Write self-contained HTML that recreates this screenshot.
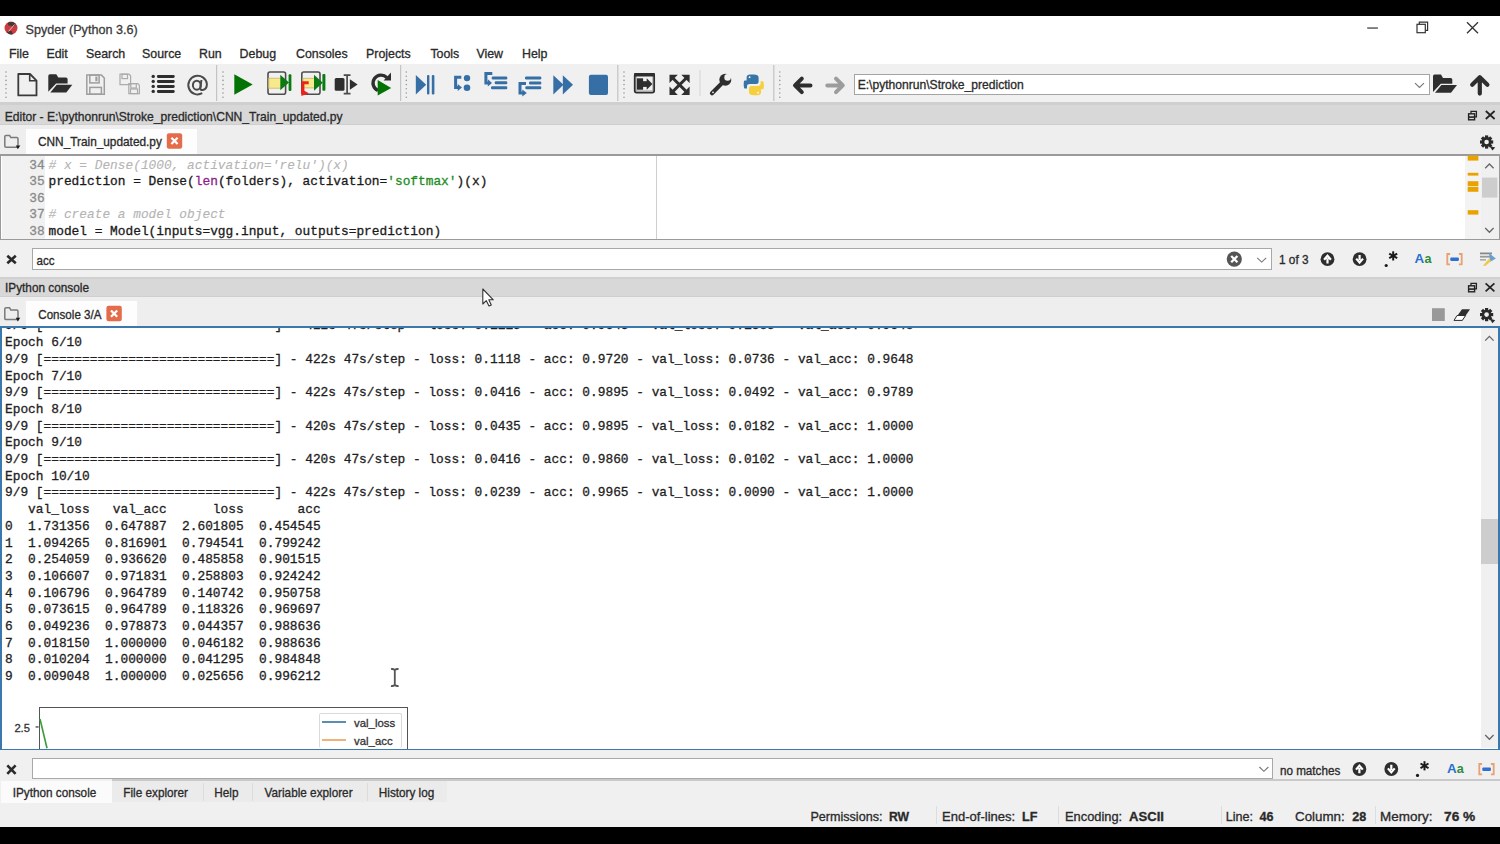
<!DOCTYPE html>
<html><head><meta charset="utf-8">
<style>
*{box-sizing:border-box;margin:0;padding:0}
html,body{width:1500px;height:844px;overflow:hidden;background:#f0f0f0;font-family:'Liberation Sans', sans-serif}
.a{position:absolute}
.t{position:absolute;white-space:pre;-webkit-text-stroke:0.3px currentColor}
svg{position:absolute;left:0;top:0}
</style></head><body>
<div class="a" style="left:0px;top:0px;width:1500px;height:16px;background:#000;"></div><div class="a" style="left:0px;top:16px;width:1500px;height:48px;background:#fff;"></div><div class="a" style="left:0px;top:64px;width:1500px;height:38px;background:#f0f0f0;"></div><div class="a" style="left:0px;top:102px;width:1500px;height:3px;background:#cfcfcf;"></div><div class="a" style="left:0px;top:105px;width:1500px;height:19px;background:#d8d8d8;"></div><div class="a" style="left:0px;top:123.5px;width:1500px;height:1.8px;background:#cecece;"></div><div class="a" style="left:0px;top:125px;width:1500px;height:29px;background:#eeeeee;"></div><div class="a" style="left:26px;top:129px;width:171px;height:25px;background:#fdfdfd;"></div><div class="a" style="left:0px;top:153.6px;width:1500px;height:86.4px;background:#fff;border:2px solid #9a9a9a;border-right-width:1px;border-left-width:1.5px;border-bottom-width:1.6px"></div><div class="a" style="left:1.5px;top:155.5px;width:43px;height:83px;background:#f1f1f1;"></div><div class="a" style="left:656px;top:155.5px;width:1px;height:83px;background:#cfcfcf;"></div><div class="a" style="left:1465px;top:155.5px;width:16px;height:83px;background:#f3f3f3;"></div><div class="a" style="left:1481px;top:155.5px;width:17.5px;height:83px;background:#f0f0f0;"></div><div class="a" style="left:0px;top:240px;width:1500px;height:37px;background:#f0f0f0;"></div><div class="a" style="left:32px;top:248px;width:1240px;height:22px;background:#fff;border:1px solid #a8a8a8"></div><div class="a" style="left:0px;top:277px;width:1500px;height:20.4px;background:#d8d8d8;"></div><div class="a" style="left:0px;top:277px;width:1500px;height:2px;background:#d0d0d0;"></div><div class="a" style="left:0px;top:295.6px;width:1500px;height:1.8px;background:#cfcfcf;"></div><div class="a" style="left:0px;top:297px;width:1500px;height:29px;background:#eeeeee;"></div><div class="a" style="left:26px;top:301px;width:111px;height:25px;background:#fdfdfd;"></div><div class="a" style="left:0px;top:326px;width:1500px;height:424px;background:#fff;border:2px solid #3a78ad;border-bottom-width:1.5px"></div><div class="a" style="left:1481px;top:328px;width:17px;height:420px;background:#f0f0f0;"></div><div class="a" style="left:1481px;top:519px;width:17px;height:45px;background:#cdcdcd;"></div><div class="a" style="left:0px;top:750px;width:1500px;height:31px;background:#f0f0f0;"></div><div class="a" style="left:32px;top:758px;width:1241px;height:21px;background:#fff;border:1px solid #a8a8a8"></div><div class="a" style="left:0px;top:781px;width:1500px;height:45px;background:#f0f0f0;"></div><div class="a" style="left:1px;top:781px;width:111px;height:22px;background:#fbfbfb;"></div><div class="a" style="left:112px;top:781px;width:335px;height:21px;background:#ebebeb;"></div><div class="a" style="left:202.5px;top:783px;width:1px;height:18px;background:#dcdcdc;"></div><div class="a" style="left:252px;top:783px;width:1px;height:18px;background:#dcdcdc;"></div><div class="a" style="left:367px;top:783px;width:1px;height:18px;background:#dcdcdc;"></div><div class="a" style="left:112px;top:778.6px;width:1388px;height:2.6px;background:#c9c9c9;"></div><div class="a" style="left:0px;top:826.6px;width:1500px;height:18px;background:#000;"></div><div class="t" style="left:25.60px;top:24.13px;font-size:12.6px;line-height:12.6px;color:#3a3a3a;font-weight:400;font-family:'Liberation Sans', sans-serif;">Spyder (Python 3.6)</div><div class="t" style="left:9.00px;top:48.10px;font-size:12.4px;line-height:12.4px;color:#2a2a2a;font-weight:400;font-family:'Liberation Sans', sans-serif;transform:scale(1.0,1.06);transform-origin:0 10.50px;">File</div><div class="t" style="left:46.40px;top:48.10px;font-size:12.4px;line-height:12.4px;color:#2a2a2a;font-weight:400;font-family:'Liberation Sans', sans-serif;transform:scale(1.0,1.06);transform-origin:0 10.50px;">Edit</div><div class="t" style="left:86.00px;top:48.10px;font-size:12.4px;line-height:12.4px;color:#2a2a2a;font-weight:400;font-family:'Liberation Sans', sans-serif;transform:scale(1.0,1.06);transform-origin:0 10.50px;">Search</div><div class="t" style="left:142.00px;top:48.10px;font-size:12.4px;line-height:12.4px;color:#2a2a2a;font-weight:400;font-family:'Liberation Sans', sans-serif;transform:scale(1.0,1.06);transform-origin:0 10.50px;">Source</div><div class="t" style="left:199.00px;top:48.10px;font-size:12.4px;line-height:12.4px;color:#2a2a2a;font-weight:400;font-family:'Liberation Sans', sans-serif;transform:scale(1.0,1.06);transform-origin:0 10.50px;">Run</div><div class="t" style="left:239.60px;top:48.10px;font-size:12.4px;line-height:12.4px;color:#2a2a2a;font-weight:400;font-family:'Liberation Sans', sans-serif;transform:scale(1.0,1.06);transform-origin:0 10.50px;">Debug</div><div class="t" style="left:296.00px;top:48.10px;font-size:12.4px;line-height:12.4px;color:#2a2a2a;font-weight:400;font-family:'Liberation Sans', sans-serif;transform:scale(1.0,1.06);transform-origin:0 10.50px;">Consoles</div><div class="t" style="left:366.00px;top:48.10px;font-size:12.4px;line-height:12.4px;color:#2a2a2a;font-weight:400;font-family:'Liberation Sans', sans-serif;transform:scale(1.0,1.06);transform-origin:0 10.50px;">Projects</div><div class="t" style="left:430.40px;top:48.10px;font-size:12.4px;line-height:12.4px;color:#2a2a2a;font-weight:400;font-family:'Liberation Sans', sans-serif;transform:scale(1.0,1.06);transform-origin:0 10.50px;">Tools</div><div class="t" style="left:476.40px;top:48.10px;font-size:12.4px;line-height:12.4px;color:#2a2a2a;font-weight:400;font-family:'Liberation Sans', sans-serif;transform:scale(1.0,1.06);transform-origin:0 10.50px;">View</div><div class="t" style="left:522.00px;top:48.10px;font-size:12.4px;line-height:12.4px;color:#2a2a2a;font-weight:400;font-family:'Liberation Sans', sans-serif;transform:scale(1.0,1.06);transform-origin:0 10.50px;">Help</div><div class="a" style="left:853.5px;top:73.5px;width:576px;height:21.5px;background:#fff;border:1px solid #a4a4a4"></div><div class="t" style="left:857.70px;top:79.06px;font-size:12.1px;line-height:12.1px;color:#2a2a2a;font-weight:400;font-family:'Liberation Sans', sans-serif;transform:scale(1.0,1.06);transform-origin:0 10.24px;">E:\pythonrun\Stroke_prediction</div><div class="t" style="left:4.70px;top:110.77px;font-size:12.08px;line-height:12.08px;color:#2a2a2a;font-weight:400;font-family:'Liberation Sans', sans-serif;transform:scale(1.0,1.04);transform-origin:0 10.23px;">Editor - E:\pythonrun\Stroke_prediction\CNN_Train_updated.py</div><div class="t" style="left:38.00px;top:136.88px;font-size:11.84px;line-height:11.84px;color:#2a2a2a;font-weight:400;font-family:'Liberation Sans', sans-serif;transform:scale(1.0,1.08);transform-origin:0 10.02px;">CNN_Train_updated.py</div><div class="t" style="left:29.30px;top:159.76px;font-size:12.84px;line-height:12.84px;color:#8a8a8a;font-weight:400;font-family:'Liberation Mono', monospace;">34</div><div class="t" style="left:48.50px;top:159.76px;font-size:12.84px;line-height:12.84px;color:#1a1a1a;font-weight:400;font-family:'Liberation Mono', monospace;"><span style="color:#b4b4b4;font-style:italic;-webkit-text-stroke:0.1px #b4b4b4"># x = Dense(1000, activation='relu')(x)</span></div><div class="t" style="left:29.30px;top:176.31px;font-size:12.84px;line-height:12.84px;color:#8a8a8a;font-weight:400;font-family:'Liberation Mono', monospace;">35</div><div class="t" style="left:48.50px;top:176.31px;font-size:12.84px;line-height:12.84px;color:#1a1a1a;font-weight:400;font-family:'Liberation Mono', monospace;">prediction = Dense(<span style="color:#8c1f8c">len</span>(folders), activation=<span style="color:#1e8c1e">'softmax'</span>)(x)</div><div class="t" style="left:29.30px;top:192.86px;font-size:12.84px;line-height:12.84px;color:#8a8a8a;font-weight:400;font-family:'Liberation Mono', monospace;">36</div><div class="t" style="left:48.50px;top:192.86px;font-size:12.84px;line-height:12.84px;color:#1a1a1a;font-weight:400;font-family:'Liberation Mono', monospace;"></div><div class="t" style="left:29.30px;top:209.41px;font-size:12.84px;line-height:12.84px;color:#8a8a8a;font-weight:400;font-family:'Liberation Mono', monospace;">37</div><div class="t" style="left:48.50px;top:209.41px;font-size:12.84px;line-height:12.84px;color:#1a1a1a;font-weight:400;font-family:'Liberation Mono', monospace;"><span style="color:#b4b4b4;font-style:italic;-webkit-text-stroke:0.1px #b4b4b4"># create a model object</span></div><div class="t" style="left:29.30px;top:225.96px;font-size:12.84px;line-height:12.84px;color:#8a8a8a;font-weight:400;font-family:'Liberation Mono', monospace;">38</div><div class="t" style="left:48.50px;top:225.96px;font-size:12.84px;line-height:12.84px;color:#1a1a1a;font-weight:400;font-family:'Liberation Mono', monospace;">model = Model(inputs=vgg.input, outputs=prediction)</div><div class="t" style="left:36.60px;top:254.78px;font-size:11.6px;line-height:11.6px;color:#2a2a2a;font-weight:400;font-family:'Liberation Sans', sans-serif;transform:scale(1.0,1.08);transform-origin:0 9.82px;">acc</div><div class="t" style="left:1279.00px;top:254.81px;font-size:11.8px;line-height:11.8px;color:#2a2a2a;font-weight:400;font-family:'Liberation Sans', sans-serif;transform:scale(1.0,1.08);transform-origin:0 9.99px;">1 of 3</div><div class="t" style="left:5.00px;top:283.01px;font-size:11.8px;line-height:11.8px;color:#2a2a2a;font-weight:400;font-family:'Liberation Sans', sans-serif;transform:scale(1.0,1.08);transform-origin:0 9.99px;">IPython console</div><div class="t" style="left:38.30px;top:309.08px;font-size:11.6px;line-height:11.6px;color:#2a2a2a;font-weight:400;font-family:'Liberation Sans', sans-serif;transform:scale(1.0,1.08);transform-origin:0 9.82px;">Console 3/A</div><div class="a" style="left:2px;top:328px;width:1479px;height:420.5px;overflow:hidden"><div class="t" style="left:3.0px;top:-7.54px;font-size:12.84px;line-height:12.84px;font-family:'Liberation Mono', monospace;color:#1e1e1e">9/9 [==============================] - 422s 47s/step - loss: 0.1115 - acc: 0.9643 - val_loss: 0.1385 - val_acc: 0.9648</div><div class="t" style="left:3.0px;top:9.16px;font-size:12.84px;line-height:12.84px;font-family:'Liberation Mono', monospace;color:#1e1e1e">Epoch 6/10</div><div class="t" style="left:3.0px;top:25.86px;font-size:12.84px;line-height:12.84px;font-family:'Liberation Mono', monospace;color:#1e1e1e">9/9 [==============================] - 422s 47s/step - loss: 0.1118 - acc: 0.9720 - val_loss: 0.0736 - val_acc: 0.9648</div><div class="t" style="left:3.0px;top:42.56px;font-size:12.84px;line-height:12.84px;font-family:'Liberation Mono', monospace;color:#1e1e1e">Epoch 7/10</div><div class="t" style="left:3.0px;top:59.26px;font-size:12.84px;line-height:12.84px;font-family:'Liberation Mono', monospace;color:#1e1e1e">9/9 [==============================] - 422s 47s/step - loss: 0.0416 - acc: 0.9895 - val_loss: 0.0492 - val_acc: 0.9789</div><div class="t" style="left:3.0px;top:75.96px;font-size:12.84px;line-height:12.84px;font-family:'Liberation Mono', monospace;color:#1e1e1e">Epoch 8/10</div><div class="t" style="left:3.0px;top:92.66px;font-size:12.84px;line-height:12.84px;font-family:'Liberation Mono', monospace;color:#1e1e1e">9/9 [==============================] - 420s 47s/step - loss: 0.0435 - acc: 0.9895 - val_loss: 0.0182 - val_acc: 1.0000</div><div class="t" style="left:3.0px;top:109.36px;font-size:12.84px;line-height:12.84px;font-family:'Liberation Mono', monospace;color:#1e1e1e">Epoch 9/10</div><div class="t" style="left:3.0px;top:126.06px;font-size:12.84px;line-height:12.84px;font-family:'Liberation Mono', monospace;color:#1e1e1e">9/9 [==============================] - 420s 47s/step - loss: 0.0416 - acc: 0.9860 - val_loss: 0.0102 - val_acc: 1.0000</div><div class="t" style="left:3.0px;top:142.76px;font-size:12.84px;line-height:12.84px;font-family:'Liberation Mono', monospace;color:#1e1e1e">Epoch 10/10</div><div class="t" style="left:3.0px;top:159.46px;font-size:12.84px;line-height:12.84px;font-family:'Liberation Mono', monospace;color:#1e1e1e">9/9 [==============================] - 422s 47s/step - loss: 0.0239 - acc: 0.9965 - val_loss: 0.0090 - val_acc: 1.0000</div><div class="t" style="left:3.0px;top:176.16px;font-size:12.84px;line-height:12.84px;font-family:'Liberation Mono', monospace;color:#1e1e1e">   val_loss   val_acc      loss       acc</div><div class="t" style="left:3.0px;top:192.86px;font-size:12.84px;line-height:12.84px;font-family:'Liberation Mono', monospace;color:#1e1e1e">0  1.731356  0.647887  2.601805  0.454545</div><div class="t" style="left:3.0px;top:209.56px;font-size:12.84px;line-height:12.84px;font-family:'Liberation Mono', monospace;color:#1e1e1e">1  1.094265  0.816901  0.794541  0.799242</div><div class="t" style="left:3.0px;top:226.26px;font-size:12.84px;line-height:12.84px;font-family:'Liberation Mono', monospace;color:#1e1e1e">2  0.254059  0.936620  0.485858  0.901515</div><div class="t" style="left:3.0px;top:242.96px;font-size:12.84px;line-height:12.84px;font-family:'Liberation Mono', monospace;color:#1e1e1e">3  0.106607  0.971831  0.258803  0.924242</div><div class="t" style="left:3.0px;top:259.66px;font-size:12.84px;line-height:12.84px;font-family:'Liberation Mono', monospace;color:#1e1e1e">4  0.106796  0.964789  0.140742  0.950758</div><div class="t" style="left:3.0px;top:276.36px;font-size:12.84px;line-height:12.84px;font-family:'Liberation Mono', monospace;color:#1e1e1e">5  0.073615  0.964789  0.118326  0.969697</div><div class="t" style="left:3.0px;top:293.06px;font-size:12.84px;line-height:12.84px;font-family:'Liberation Mono', monospace;color:#1e1e1e">6  0.049236  0.978873  0.044357  0.988636</div><div class="t" style="left:3.0px;top:309.76px;font-size:12.84px;line-height:12.84px;font-family:'Liberation Mono', monospace;color:#1e1e1e">7  0.018150  1.000000  0.046182  0.988636</div><div class="t" style="left:3.0px;top:326.46px;font-size:12.84px;line-height:12.84px;font-family:'Liberation Mono', monospace;color:#1e1e1e">8  0.010204  1.000000  0.041295  0.984848</div><div class="t" style="left:3.0px;top:343.16px;font-size:12.84px;line-height:12.84px;font-family:'Liberation Mono', monospace;color:#1e1e1e">9  0.009048  1.000000  0.025656  0.996212</div></div><div class="a" style="left:38.5px;top:707px;width:369px;height:41.5px;background:transparent;border:1.5px solid #555;border-bottom:none"></div><div class="t" style="left:14.40px;top:722.72px;font-size:11.2px;line-height:11.2px;color:#333;font-weight:400;font-family:'Liberation Sans', sans-serif;">2.5</div><div class="a" style="left:318.5px;top:712.5px;width:83.5px;height:35.8px;background:#fff;border:1px solid #dadada;border-radius:2px;border-bottom:none"></div><div class="a" style="left:322px;top:721px;width:24px;height:2px;background:#5b8fb0;"></div><div class="a" style="left:322px;top:739px;width:24px;height:2px;background:#efb27a;"></div><div class="t" style="left:354.00px;top:717.95px;font-size:11.4px;line-height:11.4px;color:#333;font-weight:400;font-family:'Liberation Sans', sans-serif;">val_loss</div><div class="t" style="left:354.00px;top:735.55px;font-size:11.4px;line-height:11.4px;color:#333;font-weight:400;font-family:'Liberation Sans', sans-serif;">val_acc</div><div class="t" style="left:1279.90px;top:764.70px;font-size:11.7px;line-height:11.7px;color:#2a2a2a;font-weight:400;font-family:'Liberation Sans', sans-serif;transform:scale(1.0,1.08);transform-origin:0 9.90px;">no matches</div><div class="t" style="left:12.70px;top:787.25px;font-size:11.75px;line-height:11.75px;color:#2a2a2a;font-weight:400;font-family:'Liberation Sans', sans-serif;transform:scale(1.0,1.08);transform-origin:0 9.95px;">IPython console</div><div class="t" style="left:123.30px;top:787.25px;font-size:11.75px;line-height:11.75px;color:#2a2a2a;font-weight:400;font-family:'Liberation Sans', sans-serif;transform:scale(1.0,1.08);transform-origin:0 9.95px;">File explorer</div><div class="t" style="left:214.30px;top:787.25px;font-size:11.75px;line-height:11.75px;color:#2a2a2a;font-weight:400;font-family:'Liberation Sans', sans-serif;transform:scale(1.0,1.08);transform-origin:0 9.95px;">Help</div><div class="t" style="left:264.60px;top:787.25px;font-size:11.75px;line-height:11.75px;color:#2a2a2a;font-weight:400;font-family:'Liberation Sans', sans-serif;transform:scale(1.0,1.08);transform-origin:0 9.95px;">Variable explorer</div><div class="t" style="left:378.80px;top:787.25px;font-size:11.75px;line-height:11.75px;color:#2a2a2a;font-weight:400;font-family:'Liberation Sans', sans-serif;transform:scale(1.0,1.08);transform-origin:0 9.95px;">History log</div><div class="t" style="left:810.40px;top:810.53px;font-size:12.6px;line-height:12.6px;color:#2a2a2a;font-weight:400;font-family:'Liberation Sans', sans-serif;transform:scale(1,1.05);transform-origin:0 10.67px;">Permissions:</div><div class="t" style="left:888.80px;top:810.53px;font-size:12.6px;line-height:12.6px;color:#2a2a2a;font-weight:700;font-family:'Liberation Sans', sans-serif;transform:scale(0.97,1.05);transform-origin:0 10.67px;">RW</div><div class="t" style="left:941.60px;top:810.53px;font-size:12.6px;line-height:12.6px;color:#2a2a2a;font-weight:400;font-family:'Liberation Sans', sans-serif;transform:scale(1.035,1.05);transform-origin:0 10.67px;">End-of-lines:</div><div class="t" style="left:1022.00px;top:810.53px;font-size:12.6px;line-height:12.6px;color:#2a2a2a;font-weight:700;font-family:'Liberation Sans', sans-serif;transform:scale(1,1.05);transform-origin:0 10.67px;">LF</div><div class="t" style="left:1064.60px;top:810.53px;font-size:12.6px;line-height:12.6px;color:#2a2a2a;font-weight:400;font-family:'Liberation Sans', sans-serif;transform:scale(1.02,1.05);transform-origin:0 10.67px;">Encoding:</div><div class="t" style="left:1128.60px;top:810.53px;font-size:12.6px;line-height:12.6px;color:#2a2a2a;font-weight:700;font-family:'Liberation Sans', sans-serif;transform:scale(1.04,1.05);transform-origin:0 10.67px;">ASCII</div><div class="t" style="left:1225.80px;top:810.53px;font-size:12.6px;line-height:12.6px;color:#2a2a2a;font-weight:400;font-family:'Liberation Sans', sans-serif;transform:scale(1,1.05);transform-origin:0 10.67px;">Line:</div><div class="t" style="left:1259.60px;top:810.53px;font-size:12.6px;line-height:12.6px;color:#2a2a2a;font-weight:700;font-family:'Liberation Sans', sans-serif;transform:scale(1,1.05);transform-origin:0 10.67px;">46</div><div class="t" style="left:1295.00px;top:810.53px;font-size:12.6px;line-height:12.6px;color:#2a2a2a;font-weight:400;font-family:'Liberation Sans', sans-serif;transform:scale(1.06,1.05);transform-origin:0 10.67px;">Column:</div><div class="t" style="left:1352.30px;top:810.53px;font-size:12.6px;line-height:12.6px;color:#2a2a2a;font-weight:700;font-family:'Liberation Sans', sans-serif;transform:scale(1,1.05);transform-origin:0 10.67px;">28</div><div class="t" style="left:1380.30px;top:810.53px;font-size:12.6px;line-height:12.6px;color:#2a2a2a;font-weight:400;font-family:'Liberation Sans', sans-serif;transform:scale(1.07,1.05);transform-origin:0 10.67px;">Memory:</div><div class="t" style="left:1444.20px;top:810.53px;font-size:12.6px;line-height:12.6px;color:#2a2a2a;font-weight:700;font-family:'Liberation Sans', sans-serif;transform:scale(1.09,1.05);transform-origin:0 10.67px;">76 %</div><div class="a" style="left:936.3px;top:806px;width:1px;height:18px;background:#dddddd;"></div><div class="a" style="left:1058px;top:806px;width:1px;height:18px;background:#dddddd;"></div><div class="a" style="left:1221px;top:806px;width:1px;height:18px;background:#dddddd;"></div><div class="a" style="left:1375px;top:806px;width:1px;height:18px;background:#dddddd;"></div>
<svg width="1500" height="844" viewBox="0 0 1500 844">
<defs>
 <g id="grip"><circle cx="0" cy="0" r="0.8"/><circle cx="0" cy="4.2" r="0.8"/><circle cx="0" cy="8.4" r="0.8"/><circle cx="0" cy="12.6" r="0.8"/><circle cx="0" cy="16.8" r="0.8"/><circle cx="0" cy="21" r="0.8"/><circle cx="0" cy="25.2" r="0.8"/></g>
 <g id="rest"><rect x="0.6" y="3" width="6" height="6" fill="none" stroke="#222" stroke-width="1.4"/><path d="M3,2.6 V0.6 H8.4 V6 H6.6" fill="none" stroke="#222" stroke-width="1.3"/><rect x="1" y="5.5" width="5" height="1.6" fill="#222"/></g>
 <g id="xcl"><path d="M0,0 L8.8,8 M8.8,0 L0,8" stroke="#222" stroke-width="1.7"/></g>
 <g id="gear"><circle cx="0" cy="0" r="4.9" fill="#2a2a2a"/>
  <g fill="#2a2a2a"><rect x="-1.6" y="-6.6" width="3.2" height="13.2"/><rect x="-1.6" y="-6.6" width="3.2" height="13.2" transform="rotate(45)"/><rect x="-1.6" y="-6.6" width="3.2" height="13.2" transform="rotate(90)"/><rect x="-1.6" y="-6.6" width="3.2" height="13.2" transform="rotate(135)"/></g>
  <circle cx="0" cy="0" r="2.3" fill="#f0f0f0"/><path d="M3,4 L8.6,5.6 L5.8,8.6 Z" fill="#2a2a2a"/></g>
 <g id="ftab"><path d="M0.8,2 Q0.8,0.8 2,0.8 H5.6 L6.8,3 H12.8 Q14,3 14,4.2 V12.6 H2 Q0.8,12.6 0.8,11.4 Z" fill="none" stroke="#7a7a7a" stroke-width="1.5"/><path d="M11.8,10.8 H16.3 L13.8,14.6 Z" fill="#1a1a1a"/></g>
 <g id="xbtn"><rect x="0" y="0" width="15.4" height="15.5" rx="2.2" fill="#e36c4b"/><path d="M4.6,4.6 L10.8,10.9 M10.8,4.6 L4.6,10.9" stroke="#fff" stroke-width="2.2"/></g>
 <g id="chev"><path d="M0,0 L4.5,4.3 L9,0" fill="none" stroke="#777" stroke-width="1.1"/></g>
 <g id="cup"><circle cx="0" cy="0" r="6.9" fill="#2e2e2e"/><path d="M0,4.2 V-1 M-3.4,0.6 L0,-3.4 L3.4,0.6" fill="none" stroke="#fff" stroke-width="2.2"/></g>
 <g id="rx"><circle cx="1.5" cy="9" r="1.6" fill="#1a1a1a"/><g stroke="#1a1a1a" stroke-width="2" transform="translate(8.5,-0.6)"><path d="M0,-4.6 V4.6"/><path d="M-4,-2.3 L4,2.3"/><path d="M-4,2.3 L4,-2.3"/></g></g>
 <g id="aa"><text x="0" y="9.9" font-family="'Liberation Sans',sans-serif" font-weight="700" font-size="13.4" fill="#2a70d0">A</text><text x="9.8" y="9.9" font-family="'Liberation Sans',sans-serif" font-weight="700" font-size="12.6" fill="#2e8b3e">a</text></g>
 <g id="brk"><path d="M3.8,0.6 H1 V11 H3.8 M12.6,0.6 H15.4 V11 H12.6" fill="none" stroke="#eba070" stroke-width="1.8"/><rect x="4" y="4.1" width="8.6" height="3.4" rx="1" fill="#2e6fd0"/></g>
 <g id="fold"><path d="M0,1.6 Q0,0 1.6,0 H8 L10,3.3 H17.6 Q19.3,3.3 19.3,5 V9.2 H7.8 L0,17.4 Z" fill="#2e2e2e"/><path d="M8.4,10.4 H24 L18,18.2 H2 Z" fill="#2e2e2e"/></g>
</defs>
<!-- spyder logo -->
<circle cx="11" cy="28" r="6.5" fill="#cc3b3d"/>
<path d="M7.8,23.2 Q11.5,20.6 15.2,23.4 Q16,24.6 14.6,26.2 L12,26.6 Q10.2,25.2 8.4,25.6 Z" fill="#3c3c3c"/>
<path d="M7,32.2 Q9.5,35.2 12.8,34.2 L11.8,31.2 Q9.6,30.6 8,30.8 Z" fill="#3c3c3c"/>
<path d="M8.5,31.5 L14.5,24.5" stroke="#f2c8c8" stroke-width="0.9"/>
<!-- window controls -->
<rect x="1367.2" y="27.4" width="10.7" height="1.3" fill="#444"/>
<rect x="1417" y="24.3" width="8.3" height="8.4" fill="none" stroke="#333" stroke-width="1.2"/>
<path d="M1419.3,24.2 V22.1 H1427.6 V30.4 H1425.4" fill="none" stroke="#333" stroke-width="1.2"/>
<path d="M1467,22.3 L1478,33.2 M1478,22.3 L1467,33.2" stroke="#333" stroke-width="1.3"/>
<!-- toolbar grips & separators -->
<g fill="#9a9a9a"><use href="#grip" x="6" y="72"/><use href="#grip" x="223" y="72"/><use href="#grip" x="406.3" y="72"/><use href="#grip" x="624" y="72"/><use href="#grip" x="779.8" y="72"/></g>
<g fill="#c4c4c4"><rect x="216" y="65" width="1.2" height="36"/><rect x="400" y="65" width="1.2" height="36"/><rect x="617.2" y="65" width="1.2" height="36"/><rect x="773.2" y="65" width="1.2" height="36"/><rect x="699.5" y="70" width="1" height="26" fill="#d4d4d4"/></g>
<!-- new file -->
<path d="M18.3,74 H30 L36.5,80.6 V95.4 H18.3 Z" fill="none" stroke="#3a3a3a" stroke-width="1.8" stroke-linejoin="round"/>
<path d="M29.7,74.2 V80.8 H36.3" fill="none" stroke="#3a3a3a" stroke-width="1.6"/>
<!-- open folder -->
<use href="#fold" x="48.3" y="74.3"/>
<!-- save -->
<g fill="none" stroke="#9e9e9e" stroke-width="1.5"><path d="M86.8,75.1 H101.4 L104.3,78 V94.2 H86.8 Z"/><rect x="89.8" y="75.1" width="9.3" height="7.8"/><rect x="89.8" y="87.4" width="11.6" height="6.8"/></g>
<rect x="95.3" y="76.6" width="2.2" height="4.6" fill="#9e9e9e"/>
<!-- save all -->
<g fill="none" stroke="#ababab" stroke-width="1.2"><path d="M120,74.2 H129 L130.6,75.8 V84.6 H120 Z"/><rect x="122" y="74.2" width="5.5" height="4.4"/><path d="M128.8,83.6 H137.8 L139.4,85.2 V93.6 H128.8 Z"/><rect x="130.8" y="83.6" width="5.5" height="4.4"/><rect x="130.5" y="89" width="7" height="4.6"/></g>
<!-- list -->
<g fill="#2e2e2e"><circle cx="153.2" cy="76.4" r="1.7"/><circle cx="153.2" cy="81.4" r="1.7"/><circle cx="153.2" cy="86.4" r="1.7"/><circle cx="153.2" cy="91.4" r="1.7"/>
<rect x="156.9" y="75" width="17.8" height="2.9" rx="1.3"/><rect x="156.9" y="80" width="17.8" height="2.9" rx="1.3"/><rect x="156.9" y="85" width="17.8" height="2.9" rx="1.3"/><rect x="156.9" y="90" width="17.8" height="2.9" rx="1.3"/></g>
<!-- @ -->
<g fill="none" stroke="#4a4a4a" stroke-width="2"><ellipse cx="196.8" cy="85.2" rx="3.9" ry="4.5"/><path d="M201.4,80 L200.4,88.2 Q200.3,90.3 202.6,90.1 Q206.9,89.4 206.9,84 A9.3,9.3 0 1 0 202.2,93.2"/></g>
<!-- run -->
<polygon points="234.3,74.3 234.3,94.7 252.7,84.5" fill="#037303"/>
<!-- run cell -->
<rect x="268" y="72" width="17.6" height="22.2" rx="2" fill="none" stroke="#4e4e4e" stroke-width="1.6"/>
<rect x="268.8" y="78.2" width="12.5" height="10" fill="#f7ea8c" stroke="#cdb871" stroke-width="0.9"/>
<polygon points="280.3,74.7 280.3,90.3 289,82.5" fill="#0b7a13"/><rect x="288.6" y="74.3" width="2.8" height="16.8" rx="1" fill="#0b7a13"/>
<!-- run cell advance -->
<rect x="301.8" y="72" width="18.2" height="22.2" rx="2" fill="none" stroke="#4e4e4e" stroke-width="1.6"/>
<rect x="303" y="78.3" width="12" height="9.6" fill="#f7ea8c" stroke="#cdb871" stroke-width="0.9"/>
<path d="M308.7,82.8 H302.9 V92" fill="none" stroke="#ec2318" stroke-width="3"/><polygon points="301.4,89.3 309,93.2 301.4,96.1" fill="#ec2318"/>
<polygon points="314,74.8 314,90.8 322.8,82.8" fill="#0b7a13"/><rect x="322.4" y="74" width="3" height="16.8" rx="1" fill="#0b7a13"/>
<!-- run selection -->
<rect x="334.7" y="78" width="9.8" height="12.8" rx="1.5" fill="#2e2e2e"/>
<path d="M347.1,75 V93.8 M343.7,75.2 H350.5 M343.7,93.6 H350.5" fill="none" stroke="#4a4a4a" stroke-width="1.7"/>
<polygon points="349.9,79.3 349.9,89.7 357.6,84.5" fill="#2e2e2e"/>
<!-- re-run -->
<path d="M386.9,77.6 A8,8 0 1 0 377.9,90.4" fill="none" stroke="#2e2e2e" stroke-width="3.3"/>
<polygon points="383.6,80.4 391,72.6 391,80.4" fill="#2e2e2e"/>
<polygon points="377.7,80.1 377.7,95.4 391.2,87.9" fill="#037303"/>
<!-- debug -->
<g fill="#356fa6"><polygon points="415.8,75.1 415.8,94.5 426.2,84.8"/><rect x="427" y="75.1" width="2.4" height="19.4" rx="1"/><rect x="431.8" y="75.1" width="2.6" height="19.4" rx="1"/>
<!-- step -->
<circle cx="467" cy="78.1" r="3.2"/><circle cx="467" cy="87.7" r="3.3"/><polygon points="457.7,83.9 462,87.5 457.7,91"/>
<!-- step into -->
<polygon points="487.8,79.3 492,82.9 487.8,86.4"/><rect x="491.7" y="76.5" width="15.6" height="2.9" rx="1.2"/><rect x="494.7" y="81.3" width="12.6" height="2.9" rx="1.2"/><rect x="491" y="86.3" width="16.3" height="2.9" rx="1.2"/>
<!-- step return -->
<rect x="525" y="76.6" width="16.3" height="2.9" rx="1.2"/><rect x="529" y="81.6" width="12.3" height="2.9" rx="1.2"/><rect x="525.3" y="86.3" width="16" height="2.9" rx="1.2"/><polygon points="522.3,89.6 526.8,93 522.3,96.4"/>
<!-- continue -->
<polygon points="553.3,75.3 553.3,94.4 563.5,84.8"/><polygon points="562.8,75.3 562.8,94.4 573,84.8"/>
<rect x="588.9" y="74.8" width="19.1" height="20.1" rx="2"/></g>
<g fill="none" stroke="#356fa6" stroke-width="3"><path d="M461.3,77.2 H455.6 V87.5 H459"/><path d="M492.3,73.5 H485.9 V82.9 H489"/><path d="M526,83.6 H520 V93 H523.4"/></g>
<!-- maximize pane -->
<rect x="634.8" y="74" width="19.3" height="18.6" rx="1.8" fill="none" stroke="#2e2e2e" stroke-width="1.9"/>
<rect x="636.1" y="75.6" width="16.8" height="15.4" fill="none" stroke="#8a8a8a" stroke-width="0.8"/>
<rect x="634" y="73" width="21" height="3.6" rx="1" fill="#2e2e2e"/>
<rect x="636.9" y="78.3" width="6.2" height="11.4" fill="#2e2e2e"/><rect x="642.8" y="81.2" width="4.4" height="5.7" fill="#2e2e2e"/><polygon points="646.7,78.3 652.4,84 646.7,89.7" fill="#2e2e2e"/>
<!-- fullscreen -->
<g fill="#2e2e2e"><polygon points="669.5,74.8 677.8,74.8 669.5,83.1"/><polygon points="689.6,74.8 681.3,74.8 689.6,83.1"/><polygon points="669.5,94.9 677.8,94.9 669.5,86.6"/><polygon points="689.6,94.9 681.3,94.9 689.6,86.6"/></g>
<path d="M672.5,77.8 L686.6,91.9 M686.6,77.8 L672.5,91.9" stroke="#2e2e2e" stroke-width="3"/>
<!-- wrench -->
<path d="M712,93.3 L721.5,83.6" stroke="#2e2e2e" stroke-width="4.2" stroke-linecap="round"/>
<circle cx="725.3" cy="79.8" r="6" fill="#2e2e2e"/><circle cx="727.6" cy="77.4" r="3.3" fill="#f0f0f0"/><polygon points="727,76.8 733,72 733,78" fill="#f0f0f0"/>
<circle cx="713" cy="92.3" r="0.9" fill="#f0f0f0"/>
<!-- python -->
<path d="M753.6,74.6 H750.2 Q746.6,74.6 746.6,77.8 V80.6 H744.6 Q743.7,80.6 743.7,84.4 Q743.7,88.6 745.1,88.6 H747 V86.4 Q747,84 749.8,84 H756.1 Q758.6,84 758.6,81.5 V77.8 Q758.6,74.6 753.6,74.6 Z" fill="#3775a9"/>
<path d="M753.6,74.6 H750.2 Q746.6,74.6 746.6,77.8 V80.6 H744.6 Q743.7,80.6 743.7,84.4 Q743.7,88.6 745.1,88.6 H747 V86.4 Q747,84 749.8,84 H756.1 Q758.6,84 758.6,81.5 V77.8 Q758.6,74.6 753.6,74.6 Z" fill="#f6cf3e" transform="rotate(180 753.8 84.95)"/>
<circle cx="749.6" cy="77.2" r="0.9" fill="#fff"/><circle cx="758" cy="92.7" r="0.9" fill="#fff"/>
<!-- back / forward -->
<path d="M810.5,85.4 H796.5 M801.8,78.6 L795,85.4 L801.8,92.2" fill="none" stroke="#2e2e2e" stroke-width="4" stroke-linecap="round" stroke-linejoin="round"/>
<path d="M827.3,85.4 H841.3 M836,78.6 L842.8,85.4 L836,92.2" fill="none" stroke="#9c9c9c" stroke-width="4" stroke-linecap="round" stroke-linejoin="round"/>
<!-- combo chevron, folder, up -->
<use href="#chev" x="1415" y="83.2"/>
<use href="#fold" x="1433" y="74.6"/>
<path d="M1479.8,93.6 V79.5 M1472.2,84.8 L1479.8,77.2 L1487.4,84.8" fill="none" stroke="#2e2e2e" stroke-width="4.2" stroke-linecap="round" stroke-linejoin="round"/>
<!-- pane header buttons -->
<use href="#rest" x="1468" y="110.8"/><use href="#xcl" x="1485.8" y="111"/>
<use href="#rest" x="1468" y="282.8"/><use href="#xcl" x="1485.6" y="283.3"/>
<!-- editor tab bar -->
<use href="#ftab" x="4" y="134.6"/>
<use href="#xbtn" x="166.8" y="133.2"/>
<use href="#gear" x="1486.6" y="142"/>
<!-- editor markers & scrollbar -->
<g fill="#e9a300"><rect x="1467.7" y="155.6" width="10.7" height="5"/><rect x="1467.7" y="172.8" width="10.7" height="2.8"/><rect x="1467.7" y="181.2" width="10.7" height="5"/><rect x="1467.7" y="187" width="10.7" height="4.8"/><rect x="1467.7" y="210.2" width="10.7" height="4.4"/></g>
<rect x="1482" y="177.6" width="15.4" height="20" fill="#cdcdcd"/>
<path d="M1485.2,168.3 L1489.4,164 L1493.6,168.3" fill="none" stroke="#666" stroke-width="1.3"/>
<path d="M1485.2,228 L1489.4,232.3 L1493.6,228" fill="none" stroke="#666" stroke-width="1.3"/>
<!-- find bar 1 -->
<path d="M7.3,255.7 L15.8,263.2 M15.8,255.7 L7.3,263.2" stroke="#2a2a2a" stroke-width="2.6"/>
<circle cx="1234.3" cy="259.1" r="7.6" fill="#555"/><path d="M1231.2,256 L1237.4,262.2 M1237.4,256 L1231.2,262.2" stroke="#fff" stroke-width="2.3"/>
<use href="#chev" x="1257.2" y="257.8"/>
<use href="#cup" x="1327.5" y="259.2"/><use href="#cup" transform="translate(1359.6,259.2) rotate(180)"/>
<use href="#rx" x="1384.7" y="256.5"/>
<use href="#aa" x="1414.6" y="253.4"/>
<use href="#brk" x="1446.3" y="253.4"/>
<g><rect x="1480" y="252.5" width="12" height="1.8" fill="#888"/><rect x="1480" y="255.8" width="12" height="1.8" fill="#999"/><polygon points="1489,253 1495.8,258.5 1490,262" fill="#6a9fd0"/><polygon points="1483,265.5 1489,258.8 1491.3,261 1485.3,266" fill="#f0c850"/><rect x="1480" y="259" width="6" height="1.6" fill="#aaa"/></g>
<!-- console tab bar -->
<use href="#ftab" x="4" y="307"/>
<use href="#xbtn" x="106.4" y="305.8"/>
<rect x="1432" y="308.2" width="12.8" height="12.8" fill="#999"/>
<path d="M1462,309.2 H1470 L1462.3,320.4 H1454 Z" fill="#2e2e2e"/><path d="M1457,315.5 H1465.6 L1462.3,320.4 H1454 Z" fill="#fff" stroke="#2e2e2e" stroke-width="1"/>
<use href="#gear" x="1486.6" y="314.6"/>
<!-- console scrollbar arrows -->
<path d="M1485.2,340.6 L1489.4,336.4 L1493.6,340.6" fill="none" stroke="#666" stroke-width="1.3"/>
<path d="M1485.2,735 L1489.4,739.3 L1493.6,735" fill="none" stroke="#666" stroke-width="1.3"/>
<!-- plot lines -->
<path d="M40,719 L47,748.3" stroke="#3b9a3b" stroke-width="1.6"/>
<rect x="35.6" y="726.3" width="3" height="1.3" fill="#444"/>
<!-- find bar 2 -->
<path d="M7.3,765.4 L15.6,773.9 M15.6,765.4 L7.3,773.9" stroke="#2a2a2a" stroke-width="2.6"/>
<use href="#chev" x="1259.4" y="767"/>
<use href="#cup" x="1359.4" y="769"/><use href="#cup" transform="translate(1391.3,769) rotate(180)"/>
<use href="#rx" x="1416" y="766.4"/>
<use href="#aa" x="1447" y="763.4"/>
<use href="#brk" x="1478.3" y="763.4"/>
<!-- cursors -->
<path d="M482.8,289 V304 L486.3,300.7 L489,306 L491.3,304.9 L488.8,299.8 L493.3,299.8 Z" fill="#fff" stroke="#333" stroke-width="1.1" stroke-linejoin="round"/>
<path d="M391,669.2 Q393,668.6 394.8,670 Q396.6,668.6 398.6,669.2 M394.8,670 V685 M391,685.8 Q393,686.4 394.8,685 Q396.6,686.4 398.6,685.8" fill="none" stroke="#555" stroke-width="1.8"/>
</svg>

</body></html>
